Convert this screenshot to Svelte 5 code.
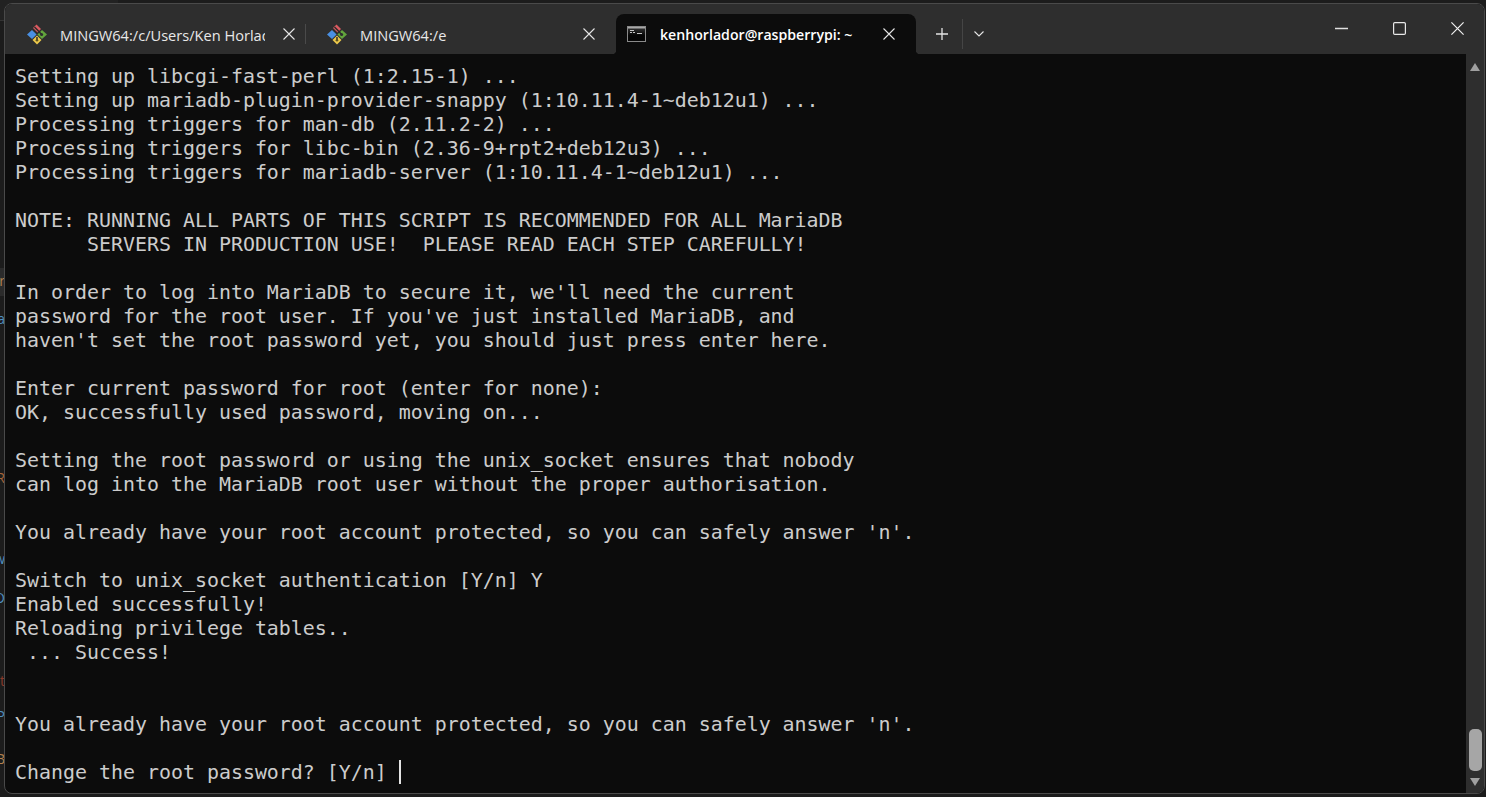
<script>
  const lines = [
    "Setting up libcgi-fast-perl (1:2.15-1) ...",
    "Setting up mariadb-plugin-provider-snappy (1:10.11.4-1~deb12u1) ...",
    "Processing triggers for man-db (2.11.2-2) ...",
    "Processing triggers for libc-bin (2.36-9+rpt2+deb12u3) ...",
    "Processing triggers for mariadb-server (1:10.11.4-1~deb12u1) ...",
    "",
    "NOTE: RUNNING ALL PARTS OF THIS SCRIPT IS RECOMMENDED FOR ALL MariaDB",
    "      SERVERS IN PRODUCTION USE!  PLEASE READ EACH STEP CAREFULLY!",
    "",
    "In order to log into MariaDB to secure it, we'll need the current",
    "password for the root user. If you've just installed MariaDB, and",
    "haven't set the root password yet, you should just press enter here.",
    "",
    "Enter current password for root (enter for none):",
    "OK, successfully used password, moving on...",
    "",
    "Setting the root password or using the unix_socket ensures that nobody",
    "can log into the MariaDB root user without the proper authorisation.",
    "",
    "You already have your root account protected, so you can safely answer 'n'.",
    "",
    "Switch to unix_socket authentication [Y/n] Y",
    "Enabled successfully!",
    "Reloading privilege tables..",
    " ... Success!",
    "",
    "",
    "You already have your root account protected, so you can safely answer 'n'.",
    "",
  ];

  // slivers of the editor behind the terminal window, visible along the left edge
  const behind = [
    { text: "r", y: 271, color: "#b5814f" },
    { text: "a", y: 309, color: "#4f8fc0" },
    { text: "R", y: 468, color: "#a8653a" },
    { text: "w", y: 549, color: "#4f8fc0" },
    { text: "O", y: 588, color: "#4f8fc0" },
    { text: "t", y: 671, color: "#8a3a2a" },
    { text: "P", y: 706, color: "#4f8fc0" },
    { text: "B", y: 749, color: "#b5814f" },
  ];
</script>

{#snippet gitIcon()}
  <svg class="tab-icon" viewBox="0 0 20 21" aria-hidden="true">
    <path d="M5 6 L9.6 10.5 L5 15 L0 10.5 Z" fill="#4a90e2" />
    <path d="M9.5 0.5 L14 5 L10.5 8.5 L6 4 Z" fill="#dc5a60" />
    <path d="M15 6 L20 10.5 L15 15 L10.4 10.5 Z" fill="#62a63c" />
    <path d="M10 11.5 L14.5 16 L10 20.5 L5.5 16 Z" fill="#ecc94b" />
    <path d="M7.5 3 L11 6.5 L14.5 10.5 M14.5 10.5 L14.5 11 M10 13 L10 17" stroke="#2e2e2e" stroke-width="1.5" fill="none" />
    <circle cx="14.6" cy="10.6" r="1.5" fill="#2e2e2e" />
    <circle cx="10" cy="16.2" r="1.3" fill="#5a5020" />
  </svg>
{/snippet}

{#snippet closeIcon()}
  <svg class="close" viewBox="0 0 12 12" aria-hidden="true">
    <path d="M.5.5 L11.5 11.5 M11.5.5 L.5 11.5" stroke="#e4e4e4" stroke-width="1.1" fill="none" />
  </svg>
{/snippet}

<div class="desktop">
  <div class="edge-top"></div>
  <div class="edge-panel"></div>
  {#each behind as item}
    <span class="behind" style="top: {item.y}px; color: {item.color}">{item.text}</span>
  {/each}
  <span class="behind-bottom">Duplicate</span>

  <div class="window">
    <header class="titlebar">
      <div class="tab">
        {@render gitIcon()}
        <span class="tab-title">MINGW64:/c/Users/Ken Horlador</span>
        {@render closeIcon()}
      </div>
      <div class="tab-sep"></div>
      <div class="tab">
        {@render gitIcon()}
        <span class="tab-title">MINGW64:/e</span>
        {@render closeIcon()}
      </div>
      <div class="tab active">
        <svg class="tab-icon cmd" viewBox="0 0 19 16" aria-hidden="true">
          <defs>
            <linearGradient id="cmd-bg" x1="0" y1="0" x2="0" y2="1">
              <stop offset="0" stop-color="#3a3a3a" />
              <stop offset="0.6" stop-color="#050505" />
            </linearGradient>
          </defs>
          <rect x="0.5" y="0.5" width="18" height="15" fill="url(#cmd-bg)" stroke="#8a8a8a" />
          <rect x="1" y="1" width="17" height="1.5" fill="#a8a8a8" />
          <path d="M3 4h4v1H3zM3 6h2v1H3zM6 6h2v1H6zM10 7h5v1h-5z" fill="#c4c4c4" />
        </svg>
        <span class="tab-title">kenhorlador@raspberrypi: ~</span>
        {@render closeIcon()}
      </div>
      <div class="tab-actions">
        <svg class="plus" viewBox="0 0 12 12" aria-hidden="true">
          <path d="M6 0 V12 M0 6 H12" stroke="#e4e4e4" stroke-width="1.3" fill="none" />
        </svg>
        <div class="action-sep"></div>
        <svg class="chevron" viewBox="0 0 10 6" aria-hidden="true">
          <path d="M.5.5 L5 5 L9.5.5" stroke="#e4e4e4" stroke-width="1.1" fill="none" />
        </svg>
      </div>
      <div class="caption">
        <svg viewBox="0 0 13 13" aria-hidden="true"><path d="M0 6.5 H13" stroke="#e0e0e0" stroke-width="1.4" /></svg>
        <svg viewBox="0 0 13 13" aria-hidden="true"><rect x=".6" y=".6" width="11.8" height="11.8" rx="1.2" stroke="#e8e8e8" stroke-width="1.2" fill="none" /></svg>
        <svg viewBox="0 0 13 13" aria-hidden="true"><path d="M.4.4 L12.6 12.6 M12.6.4 L.4 12.6" stroke="#f0f0f0" stroke-width="1.2" fill="none" /></svg>
      </div>
    </header>

    <main class="body">
      <pre class="terminal">{#each lines as line}{line}{"\n"}{/each}Change the root password? [Y/n] <span class="cursor"></span></pre>
      <aside class="scrollbar">
        <span class="arrow up"></span>
        <span class="thumb"></span>
        <span class="arrow down"></span>
      </aside>
    </main>
  </div>
</div>

<style>
  :global(body) {
    background: #1c1c1c;
    overflow: hidden;
  }

  .desktop {
    position: relative;
    height: 797px;
    overflow: hidden;
    padding-top: 3px;
    box-sizing: border-box;
  }

  .edge-top {
    position: absolute;
    left: 0;
    top: 0;
    width: 118px;
    height: 20px;
    background: #222;
    border-bottom: 1px solid #333;
  }

  .edge-panel {
    position: absolute;
    left: 0;
    top: 268px;
    width: 5px;
    height: 28px;
    background: #2b2b2b;
  }

  .behind {
    position: absolute;
    right: calc(100% - 5px);
    font: 14px "Open Sans", sans-serif;
    line-height: 20px;
  }

  .behind-bottom {
    position: absolute;
    left: -14px;
    top: 794px;
    font: 14px "Open Sans", sans-serif;
    color: #b0b0b0;
  }

  .window {
    position: relative;
    box-sizing: border-box;
    width: 1481px;
    height: 791px;
    margin-left: 4px;
    display: flex;
    flex-direction: column;
    background: #0c0c0c;
    border: 1px solid #4a4a4a;
    border-radius: 8px;
    overflow: hidden;
  }

  .titlebar {
    flex: none;
    height: 50px;
    box-sizing: border-box;
    padding: 10px 0 0 1px;
    display: flex;
    align-items: stretch;
    background: #2e2e2e;
    font-family: "Open Sans", "Noto Sans", sans-serif;
    font-size: 14.6px;
    color: #e8e8e8;
  }

  .tab {
    position: relative;
    width: 300px;
    box-sizing: border-box;
    padding: 1px 0 0 21px;
    display: flex;
    align-items: center;
  }

  .tab.active {
    background: #0c0c0c;
    border-radius: 8px 8px 0 0;
    color: #fff;
    font-size: 14.15px;
    font-weight: 600;
    margin-left: 10px;
    padding-left: 11px;
  }

  .tab.active::before,
  .tab.active::after {
    content: "";
    position: absolute;
    bottom: 0;
    width: 4px;
    height: 4px;
  }

  .tab.active::before {
    left: -4px;
    background: radial-gradient(circle at 0 0, transparent 4px, #0c0c0c 4.5px);
  }

  .tab.active::after {
    right: -4px;
    background: radial-gradient(circle at 100% 0, transparent 4px, #0c0c0c 4.5px);
  }

  .tab-icon {
    flex: none;
    width: 20px;
    height: 21px;
    margin-right: 13px;
  }

  .tab-icon.cmd {
    width: 19px;
    height: 16px;
    margin-right: 14px;
    margin-top: -2px;
  }

  .tab-title {
    width: 205px;
    overflow: hidden;
    white-space: nowrap;
  }

  .tab.active .tab-title {
    width: 223px;
  }

  .close {
    flex: none;
    width: 12px;
    height: 12px;
    margin-left: 18px;
    margin-top: -2px;
  }

  .tab.active .close {
    margin-left: 0;
  }

  .tab-sep {
    width: 1px;
    height: 20px;
    align-self: center;
    background: #4a4a4a;
    margin-left: -1px;
  }

  .tab-actions {
    display: flex;
    align-items: center;
    padding-left: 20px;
  }

  .plus {
    width: 12px;
    height: 12px;
  }

  .action-sep {
    width: 1px;
    height: 30px;
    background: #454545;
    margin: 0 11px 0 14px;
  }

  .chevron {
    width: 10px;
    height: 6px;
  }

  .caption {
    margin-left: auto;
    display: flex;
    align-items: center;
    gap: 45px;
    padding: 0 20px 12px 0;
  }

  .caption svg {
    width: 13px;
    height: 13px;
  }

  .body {
    flex: 1;
    min-height: 0;
    display: flex;
  }

  .terminal {
    flex: 1;
    margin: 0;
    padding: 11px 0 0 10px;
    font-family: "DejaVu Sans Mono", monospace;
    font-size: 19.93px;
    line-height: 24px;
    color: #cccccc;
  }

  .cursor {
    display: inline-block;
    width: 2px;
    height: 24px;
    margin-top: -6px;
    background: #e4e4e4;
    vertical-align: -5px;
  }

  .scrollbar {
    flex: none;
    width: 18px;
    padding: 9px 0 7px;
    box-sizing: border-box;
    background: #2e2e2e;
    display: flex;
    flex-direction: column;
    align-items: center;
  }

  .arrow {
    width: 0;
    height: 0;
    border-left: 5px solid transparent;
    border-right: 5px solid transparent;
  }

  .arrow.up {
    border-bottom: 8px solid #a0a0a0;
  }

  .arrow.down {
    border-top: 8px solid #a0a0a0;
  }

  .thumb {
    margin-top: auto;
    margin-bottom: 7px;
    width: 13px;
    height: 42px;
    border-radius: 5px;
    background: #a6a6a6;
  }
</style>
